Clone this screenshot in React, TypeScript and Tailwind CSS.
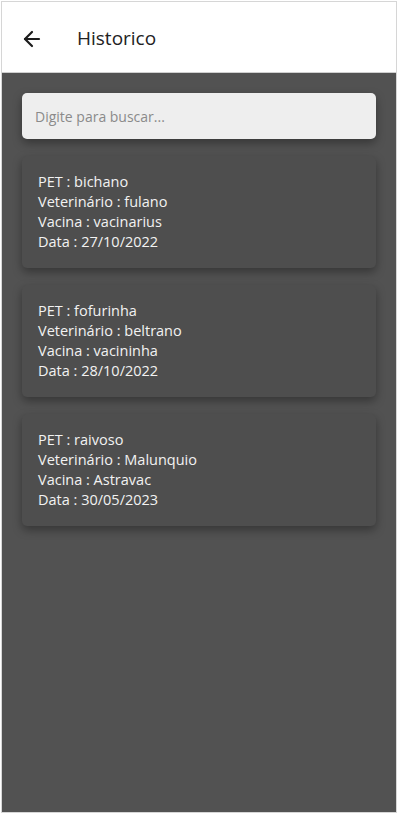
import { ArrowLeft } from "lucide-react";

interface Registro {
  pet: string;
  veterinario: string;
  vacina: string;
  data: string;
}

const registros: Registro[] = [
  { pet: "bichano", veterinario: "fulano", vacina: "vacinarius", data: "27/10/2022" },
  { pet: "fofurinha", veterinario: "beltrano", vacina: "vacininha", data: "28/10/2022" },
  { pet: "raivoso", veterinario: "Malunquio", vacina: "Astravac", data: "30/05/2023" },
];

function CartaoVacina({ r }: { r: Registro }) {
  return (
    <div className="h-[112px] shrink-0 rounded-[5px] bg-[#4e4e4e] px-4 pt-[16px] text-[14.5px] leading-5 text-[#f2f2f2] shadow-[0_4px_10px_rgba(0,0,0,0.35)]">
      <p>PET : {r.pet}</p>
      <p>Veterinário : {r.veterinario}</p>
      <p>Vacina : {r.vacina}</p>
      <p>Data : {r.data}</p>
    </div>
  );
}

export default function App() {
  return (
    <div className="h-[815px] w-[401px] bg-white pl-px pt-px font-['Open_Sans',sans-serif]">
      <div className="flex h-[812px] w-[396px] flex-col border border-[#d6d6d6]">
        {/* Header */}
        <div className="flex h-[71px] shrink-0 items-center border-b border-[#cfcfcf] bg-white pt-[3px]">
          <ArrowLeft className="ml-[18px] h-6 w-6 text-[#1d1d1d]" strokeWidth={2.2} />
          <h1 className="ml-[33px] text-[19px] font-medium text-[#222]">Historico</h1>
        </div>

        {/* Conteudo */}
        <div className="flex flex-1 flex-col gap-[17px] bg-[#525252] px-5 pt-5">
          <input
            type="text"
            placeholder="Digite para buscar..."
            className="h-[46px] w-full shrink-0 rounded-[5px] bg-[#eeeeee] px-[13px] text-[14px] text-[#333] shadow-[0_4px_10px_rgba(0,0,0,0.35)] outline-none placeholder:text-[#8a8a8a]"
          />
          {registros.map((r) => (
            <CartaoVacina key={r.pet} r={r} />
          ))}
        </div>
      </div>
    </div>
  );
}
